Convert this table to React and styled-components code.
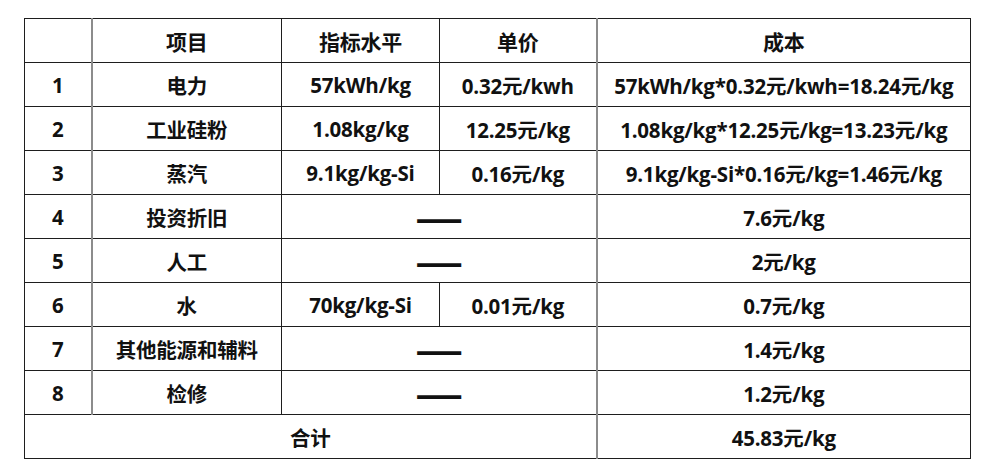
import React from "react";
import styled, { createGlobalStyle } from "styled-components";

const GlobalStyle = createGlobalStyle`
  html, body {
    margin: 0;
    padding: 0;
    background: #ffffff;
  }
  body {
    font-family: "Open Sans", "Noto Sans CJK SC", sans-serif;
    color: #111;
  }
`;

const Page = styled.div`
  padding: 18px 0 0 24px;
`;

const Table = styled.table`
  border-collapse: collapse;
  table-layout: fixed;
  width: 946px;
  border: 1.5px solid #1e1e1e;
`;

const Cell = styled.td`
  height: 43px;
  padding: 0;
  text-align: center;
  vertical-align: middle;
  font-size: 20.5px;
  font-weight: 700;
  white-space: nowrap;
  letter-spacing: -0.2px;
  border: 1.5px solid #1e1e1e;
  border-left: ${(p) => (p.$gray ? "2px solid #8c8c8c" : "1.5px solid #1e1e1e")};
`;

const HeadCell = styled(Cell).attrs({ as: "th" })`
  font-size: 21px;
`;

const Dash = styled.span`
  display: inline-block;
  font-family: "Noto Sans CJK SC", sans-serif;
  font-size: 21px;
  font-weight: 900;
  letter-spacing: -1px;
  transform: scale(1.3, 1.6);
`;

const rows = [
  ["1", "电力", "57kWh/kg", "0.32元/kwh", "57kWh/kg*0.32元/kwh=18.24元/kg"],
  ["2", "工业硅粉", "1.08kg/kg", "12.25元/kg", "1.08kg/kg*12.25元/kg=13.23元/kg"],
  ["3", "蒸汽", "9.1kg/kg-Si", "0.16元/kg", "9.1kg/kg-Si*0.16元/kg=1.46元/kg"],
  ["4", "投资折旧", null, null, "7.6元/kg"],
  ["5", "人工", null, null, "2元/kg"],
  ["6", "水", "70kg/kg-Si", "0.01元/kg", "0.7元/kg"],
  ["7", "其他能源和辅料", null, null, "1.4元/kg"],
  ["8", "检修", null, null, "1.2元/kg"],
];

export default function App() {
  return (
    <Page>
      <GlobalStyle />
      <Table>
        <colgroup>
          <col style={{ width: 67 }} />
          <col style={{ width: 190 }} />
          <col style={{ width: 158 }} />
          <col style={{ width: 157 }} />
          <col style={{ width: 374 }} />
        </colgroup>
        <thead>
          <tr>
            <HeadCell></HeadCell>
            <HeadCell $gray>项目</HeadCell>
            <HeadCell>指标水平</HeadCell>
            <HeadCell>单价</HeadCell>
            <HeadCell $gray>成本</HeadCell>
          </tr>
        </thead>
        <tbody>
          {rows.map(([no, item, level, price, cost]) => (
            <tr key={no}>
              <Cell>{no}</Cell>
              <Cell $gray>{item}</Cell>
              {level === null ? (
                <Cell colSpan={2}>
                  <Dash>——</Dash>
                </Cell>
              ) : (
                <>
                  <Cell>{level}</Cell>
                  <Cell>{price}</Cell>
                </>
              )}
              <Cell $gray>{cost}</Cell>
            </tr>
          ))}
          <tr>
            <Cell colSpan={4}>合计</Cell>
            <Cell $gray>45.83元/kg</Cell>
          </tr>
        </tbody>
      </Table>
    </Page>
  );
}
